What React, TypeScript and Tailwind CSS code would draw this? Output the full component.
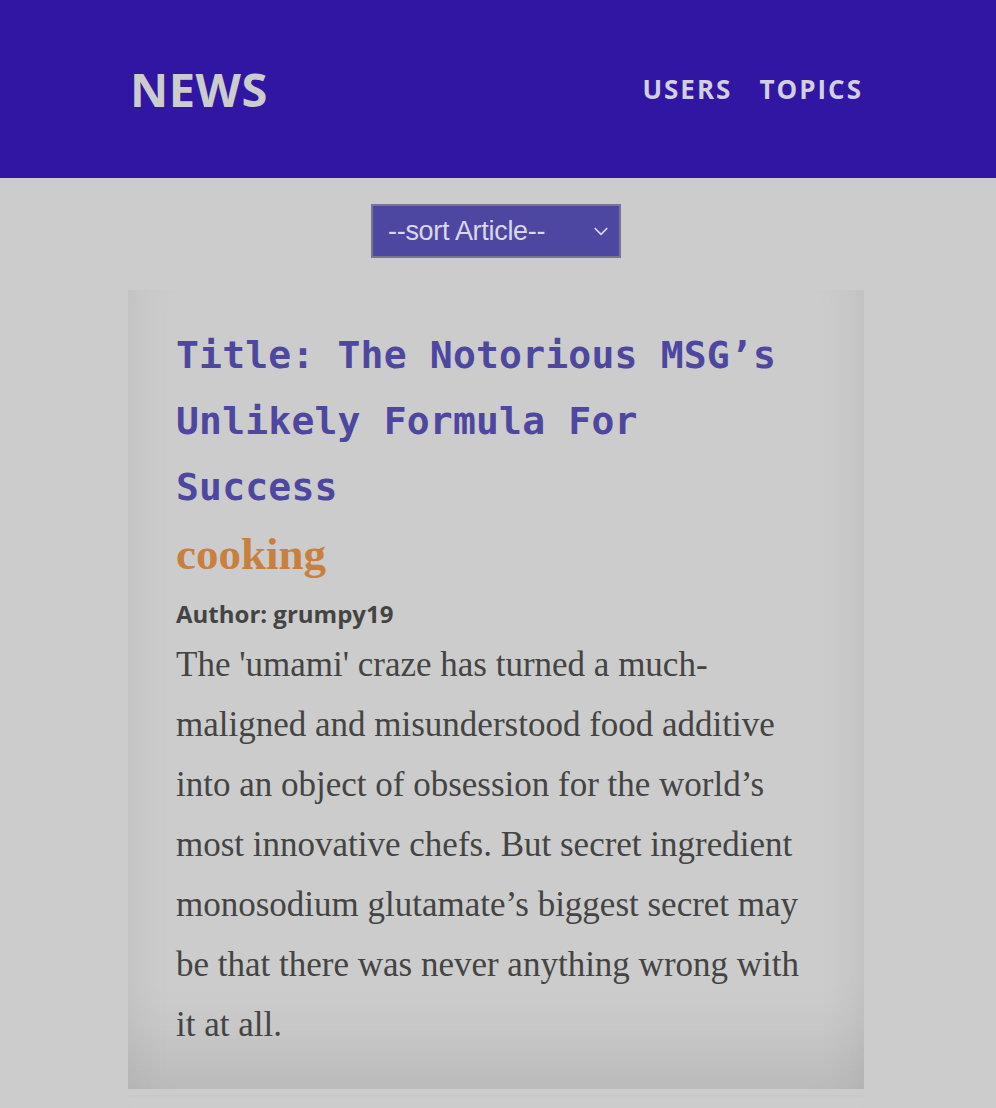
import React from 'react'

export default function App() {
  return (
    <div className="min-h-[1108px] bg-[#cccccc]">
      <header className="h-[178px] bg-[#3116a3] flex items-center justify-between pl-[130px] pr-[133px]">
        <h1 className="text-[47px] font-bold text-[#cccccc] tracking-[0.5px]" style={{ fontFamily: '"Open Sans", "Noto Sans", sans-serif' }}>NEWS</h1>
        <nav className="flex gap-[27px] text-[26px] font-bold text-[#d2cfe0] tracking-[2px]" style={{ fontFamily: '"Open Sans", "Noto Sans", sans-serif' }}>
          <span>USERS</span>
          <span>TOPICS</span>
        </nav>
      </header>

      <div className="flex justify-center pt-[26px] pr-[4px]">
        <div className="w-[250px] h-[54px] bg-[#4e47a1] border-2 border-[#77778a] flex items-center justify-between pl-[15px] pr-[8px]">
          <span className="text-[27px] text-[#d9d7ea] tracking-[-0.3px]" style={{ fontFamily: '"Liberation Sans", Arial, sans-serif' }}>--sort Article--</span>
          <svg width="20" height="20" viewBox="0 0 24 24" fill="none" stroke="#d9d7ea" strokeWidth="2" strokeLinecap="round" strokeLinejoin="round"><path d="M5 9l7 7 7-7" /></svg>
        </div>
      </div>

      <main className="flex flex-col items-center pt-[32px] pr-[4px] gap-[6px]">
        <article className="w-[736px] bg-[#cccccc] shadow-[inset_0_-90px_70px_-50px_rgba(0,0,0,0.09),inset_40px_0_40px_-30px_rgba(0,0,0,0.05),inset_-40px_0_40px_-30px_rgba(0,0,0,0.06)] px-[48px] pt-[32px] pb-[34px]">
          <h2 className="text-[38px] leading-[66px] font-bold text-[#4d47a0] tracking-[0.2px]" style={{ fontFamily: '"DejaVu Sans Mono", "Liberation Mono", monospace' }}>
            Title: The Notorious MSG’s Unlikely Formula For Success
          </h2>
          <h3 className="text-[45px] leading-[56px] font-bold text-[#c8803f] mt-[6px]" style={{ fontFamily: '"Liberation Serif", serif' }}>cooking</h3>
          <p className="text-[24px] leading-[30px] font-bold text-[#444444] mt-[17px]" style={{ fontFamily: '"Open Sans", "Noto Sans", sans-serif' }}>Author: grumpy19</p>
          <p className="text-[35px] leading-[60px] text-[#444444] mt-[6px]" style={{ fontFamily: '"Liberation Serif", "Times New Roman", serif' }}>
            The 'umami' craze has turned a much-maligned and misunderstood food additive into an object of obsession for the world’s most innovative chefs. But secret ingredient monosodium glutamate’s biggest secret may be that there was never anything wrong with it at all.
          </p>
        </article>
        <div className="w-[736px] h-[40px] shadow-[inset_0_2px_2px_rgba(0,0,0,0.02)]" />
      </main>
    </div>
  )
}
